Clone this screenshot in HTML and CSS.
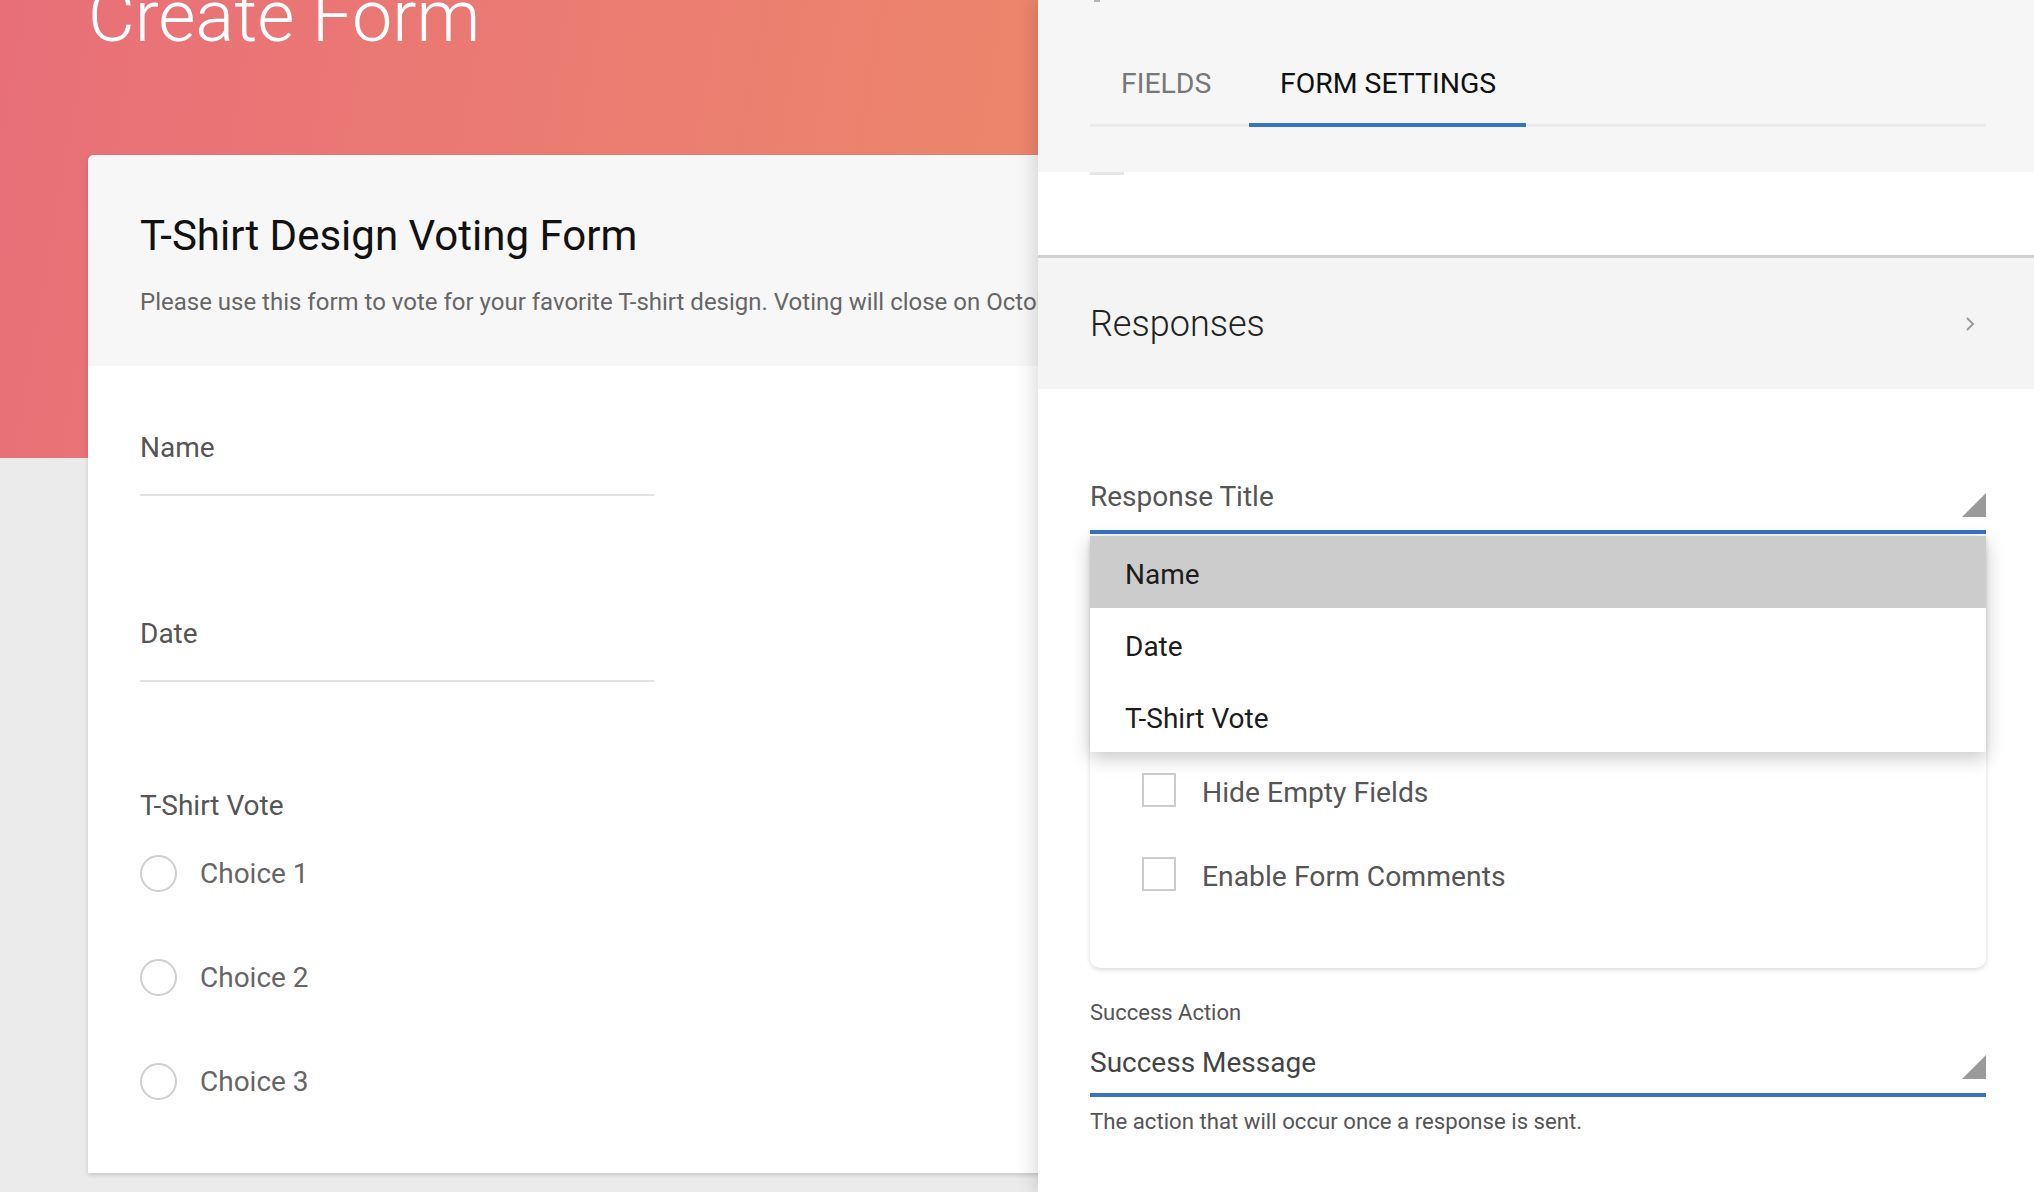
FILE: index.html
```html
<!DOCTYPE html>
<html lang="en">
<head>
<meta charset="utf-8">
<title>Create Form</title>
<link rel="stylesheet" href="styles.css">
</head>
<body>
<div class="app">
  <main class="builder">
    <h1 class="page-title">Create Form</h1>
    <section class="form-card">
      <header class="form-head">
        <h2 class="form-title">T-Shirt Design Voting Form</h2>
        <p class="form-desc">Please use this form to vote for your favorite T-shirt design. Voting will close on October 31st.</p>
      </header>
      <div class="form-body">
        <div class="field field--name">
          <div class="field-label">Name</div>
          <div class="field-input"></div>
        </div>
        <div class="field field--date">
          <div class="field-label">Date</div>
          <div class="field-input"></div>
        </div>
        <div class="field field--choice">
          <div class="field-label">T-Shirt Vote</div>
          <div class="choices">
            <label class="choice"><span class="radio"></span><span>Choice 1</span></label>
            <label class="choice"><span class="radio"></span><span>Choice 2</span></label>
            <label class="choice"><span class="radio"></span><span>Choice 3</span></label>
          </div>
        </div>
      </div>
    </section>
  </main>

  <aside class="panel">
    <div class="panel-head">
      <span class="back-mark"></span>
      <nav class="tabs">
        <span class="tab">FIELDS</span>
        <span class="tab tab--active">FORM SETTINGS</span>
      </nav>
    </div>
    <div class="peek"></div>
    <div class="gap"></div>
    <div class="section-head">
      <span class="section-title">Responses</span>
      <svg class="chevron" width="12" height="18" viewBox="0 0 12 18"><path d="M3 3 L9 9 L3 15" fill="none" stroke="#9a9a9a" stroke-width="2"/></svg>
    </div>
    <div class="settings">
      <div class="select select--title">
        <span class="select-text muted">Response Title</span>
        <span class="caret"></span>
      </div>
      <div class="menu-host">
        <ul class="menu">
          <li class="menu-item menu-item--hover">Name</li>
          <li class="menu-item">Date</li>
          <li class="menu-item">T-Shirt Vote</li>
        </ul>
        <div class="options-card">
          <label class="check"><span class="box"></span><span class="check-text">Hide Empty Fields</span></label>
          <label class="check"><span class="box"></span><span class="check-text">Enable Form Comments</span></label>
        </div>
      </div>
      <div class="small-label">Success Action</div>
      <div class="select select--action">
        <span class="select-text">Success Message</span>
        <span class="caret"></span>
      </div>
      <p class="helper">The action that will occur once a response is sent.</p>
    </div>
  </aside>
</div>
</body>
</html>
```

FILE: styles.css
```css
* { box-sizing: border-box; }

html, body {
  margin: 0;
  padding: 0;
}

body {
  width: 2034px;
  height: 1192px;
  overflow: hidden;
  background: #ebebeb;
  font-family: Roboto, "Noto Sans", "Liberation Sans", sans-serif;
}

.app {
  display: flex;
  height: 1192px;
}

/* left: form preview */
.builder {
  width: 1038px;
  flex: none;
  overflow: hidden;
  background:
    linear-gradient(100deg, #e86f78 0%, #ea7a73 45%, #ed876b 100%) 0 0 / 100% 458px no-repeat,
    #ebebeb;
}

.page-title {
  margin: -19px 0 0 88px;
  font-size: 72px;
  line-height: 72px;
  font-weight: 300;
  color: #fff;
}

.form-card {
  margin: 102px 0 0 88px;
  width: 1100px;
  background: #fff;
  border-radius: 6px 6px 0 0;
  box-shadow: 0 2px 4px rgba(0, 0, 0, 0.16);
}

.form-head {
  background: #f7f7f7;
  height: 211px;
  padding: 57px 52px 0;
  border-radius: 6px 6px 0 0;
}

.form-title {
  margin: 0;
  font-size: 42px;
  line-height: 48px;
  font-weight: 400;
  color: #111;
}

.form-desc {
  margin: 26px 0 0;
  font-size: 24px;
  line-height: 32px;
  color: #666;
  white-space: nowrap;
}

.form-body {
  padding: 64px 52px 64px;
}

.field-label {
  font-size: 28px;
  line-height: 36px;
  color: #555;
}

.field-input {
  width: 514px;
  height: 30px;
  border-bottom: 2px solid #e2e2e2;
}

.field--name { margin-bottom: 120px; }
.field--date { margin-bottom: 106px; }

.choices {
  display: flex;
  flex-direction: column;
  gap: 48px;
  margin-top: 21px;
}

.choice {
  display: flex;
  align-items: center;
  height: 56px;
  gap: 23px;
  font-size: 28px;
  color: #666;
}

.radio {
  width: 37px;
  height: 37px;
  border: 2px solid #cfcfcf;
  border-radius: 50%;
}

/* right: settings panel */
.panel {
  flex: 1;
  position: relative;
  z-index: 1;
  background: #fff;
  box-shadow: -4px 0 18px rgba(0, 0, 0, 0.14);
}

.panel-head {
  background: #f6f6f6;
  height: 172px;
  padding: 0 48px 0 52px;
}

.back-mark {
  display: block;
  width: 6px;
  height: 2px;
  margin-left: 4px;
  background: #b5b5b5;
}

.tabs {
  display: flex;
  margin-top: 64px;
  box-shadow: inset 0 -3px 0 #ececec;
}

.tab {
  min-width: 159px;
  padding: 0 30px 21px 31px;
  font-size: 28.4px;
  line-height: 36px;
  color: #777;
  border-bottom: 4px solid transparent;
}

.tab--active {
  color: #111;
  border-bottom-color: #3574c4;
}

.peek {
  width: 34px;
  height: 3px;
  margin-left: 52px;
  background: #e6e6e6;
}

.gap { height: 80px; }

.section-head {
  display: flex;
  align-items: center;
  justify-content: space-between;
  height: 134px;
  padding: 0 58px 0 52px;
  border-top: 3px solid #d0d0d0;
  background: #f4f4f4;
}

.section-title {
  font-size: 36px;
  font-weight: 300;
  color: #222;
}

.settings {
  padding: 0 48px 0 52px;
}

.select {
  display: flex;
  justify-content: space-between;
  align-items: flex-end;
  border-bottom: 4px solid #3574c4;
}

.select--title {
  margin-top: 90px;
  padding-bottom: 15px;
}

.select--action {
  margin-top: 17px;
  padding-bottom: 12px;
}

.select-text {
  font-size: 28px;
  line-height: 36px;
  color: #444;
}

.select-text.muted { color: #555; }

.caret {
  width: 24px;
  height: 24px;
  background: #9a9a9a;
  clip-path: polygon(100% 0, 100% 100%, 0 100%);
}

.select--title .caret { margin-bottom: -2px; }
.select--action .caret { margin-bottom: 2px; }

.menu-host {
  position: relative;
  margin-top: 2px;
}

.menu {
  position: absolute;
  top: 0;
  left: 0;
  right: 0;
  z-index: 2;
  margin: 0;
  padding: 0;
  list-style: none;
  background: #fff;
  box-shadow: 0 6px 18px rgba(0, 0, 0, 0.22);
}

.menu-item {
  height: 72px;
  display: flex;
  align-items: center;
  padding: 4px 0 0 35px;
  font-size: 28px;
  color: #1c1c1c;
}

.menu-item--hover { background: #cccccc; }

.options-card {
  display: flex;
  flex-direction: column;
  gap: 50px;
  padding: 237px 52px 77px;
  background: #fff;
  border-radius: 0 0 10px 10px;
  box-shadow: 0 2px 5px rgba(0, 0, 0, 0.14);
}

.check {
  display: flex;
  align-items: center;
  gap: 26px;
  height: 34px;
  font-size: 28.3px;
  color: #555;
}

.check-text { padding-top: 5px; }

.box {
  width: 34px;
  height: 34px;
  border: 2px solid #cccccc;
}

.small-label {
  margin-top: 30px;
  font-size: 22px;
  line-height: 30px;
  color: #555;
}

.helper {
  margin: 10px 0 0;
  font-size: 22.2px;
  line-height: 28px;
  color: #555;
}
```
